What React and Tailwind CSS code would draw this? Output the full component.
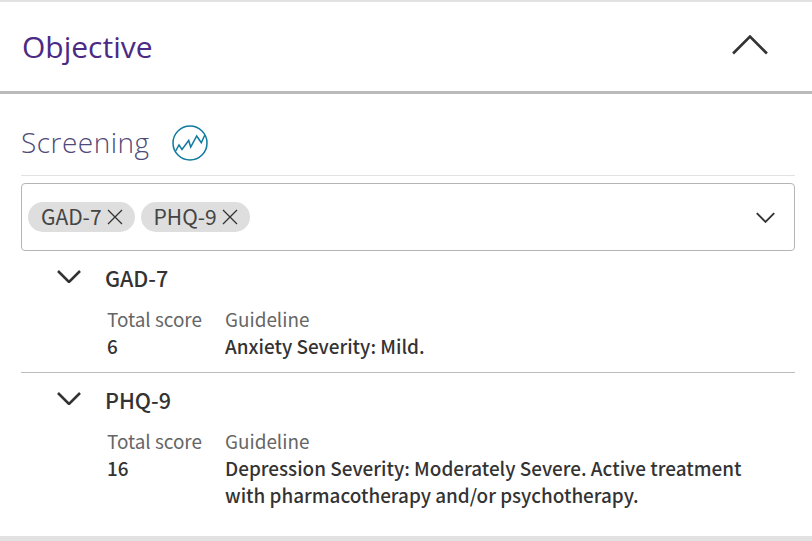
const body = { fontFamily: '"Noto Sans CJK SC", "Noto Sans", sans-serif' };

function Chevron({ className, sw = 2 }) {
  return (
    <svg viewBox="0 0 24 13" fill="none" stroke="#333" strokeWidth={sw} className={className}>
      <path d="M1 1 12 12 23 1" />
    </svg>
  );
}

function TrendIcon() {
  return (
    <svg width="36" height="36" viewBox="0 0 36 36" fill="none" stroke="#0f7a9e" strokeWidth="1.5" className="mt-[2px]">
      <circle cx="18" cy="18" r="17" />
      <path d="M3.700 26 7 20l3 4.500 6.700-9 2 6.500 6-11 4.600 6.700 3.400-7.400" />
    </svg>
  );
}

function Chip({ label }) {
  return (
    <span className="flex h-[30px] items-center gap-[5px] rounded-full bg-[#dedede] pl-[13px] pr-[12px] text-[21px] text-[#444]">
      {label}
      <svg width="16" height="16" viewBox="0 0 16 16" stroke="#333" strokeWidth="1.3" fill="none">
        <path d="M1 1l14 14M15 1 1 15" />
      </svg>
    </span>
  );
}

function Score({ name, score, lines, border }) {
  return (
    <div className={border ? "border-b border-[#bbb] pb-[13px] pt-[6px]" : "pb-[28px] pt-[6px]"}>
      <div className="flex h-[44px] items-center pl-[36px]">
        <Chevron className="mb-[6px] h-[13px] w-[24px]" sw={2.6} />
        <span className="mb-[2px] ml-[24px] text-[21.500px] font-medium text-[#333]">{name}</span>
      </div>
      <div className="flex pl-[86px] pt-[4px] text-[18.900px] leading-[27px]">
        <div className="w-[118px]">
          <div className="text-[#666]">Total score</div>
          <div className="font-medium text-[#333]">{score}</div>
        </div>
        <div>
          <div className="text-[#666]">Guideline</div>
          {lines.map(l => <div key={l} className="font-medium text-[#333]">{l}</div>)}
        </div>
      </div>
    </div>
  );
}

export default function App() {
  return (
    <div className="h-[541px] w-[812px] overflow-hidden bg-white" style={body}>
      <div className="h-[2px] bg-[#e2e2e2]" />
      <div className="flex h-[92px] items-center justify-between border-b-[3px] border-[#bbb] pl-[22px] pr-[43px]">
        <h2 className="text-[30px] text-[#4b2a85]" style={{ fontFamily: '"Open Sans", sans-serif' }}>Objective</h2>
        <Chevron className="mb-[4px] h-[20px] w-[38px] rotate-180" sw={1.7} />
      </div>
      <div className="pl-[21px] pr-[17px]">
        <div className="flex h-[82px] items-center gap-[22px] border-b border-[#e2e2e2] pt-[14px]">
          <h3 className="text-[28px] font-light tracking-[0.5px] text-[#4f4a78]" style={{ fontFamily: '"Open Sans", sans-serif' }}>Screening</h3>
          <TrendIcon />
        </div>
        <div className="mt-[7px] flex h-[68px] items-center justify-between rounded-[4px] border border-[#b5b5b5] pl-[6px] pr-[19px]">
          <div className="flex gap-[6px]">
            <Chip label="GAD-7" />
            <Chip label="PHQ-9" />
          </div>
          <Chevron className="h-[11px] w-[19px]" sw={2.4} />
        </div>
        <Score name="GAD-7" score="6" lines={["Anxiety Severity: Mild."]} border />
        <Score name="PHQ-9" score="16" lines={["Depression Severity: Moderately Severe. Active treatment", "with pharmacotherapy and/or psychotherapy."]} />
      </div>
      <div className="h-[5px] bg-[#e2e2e2]" />
    </div>
  );
}
